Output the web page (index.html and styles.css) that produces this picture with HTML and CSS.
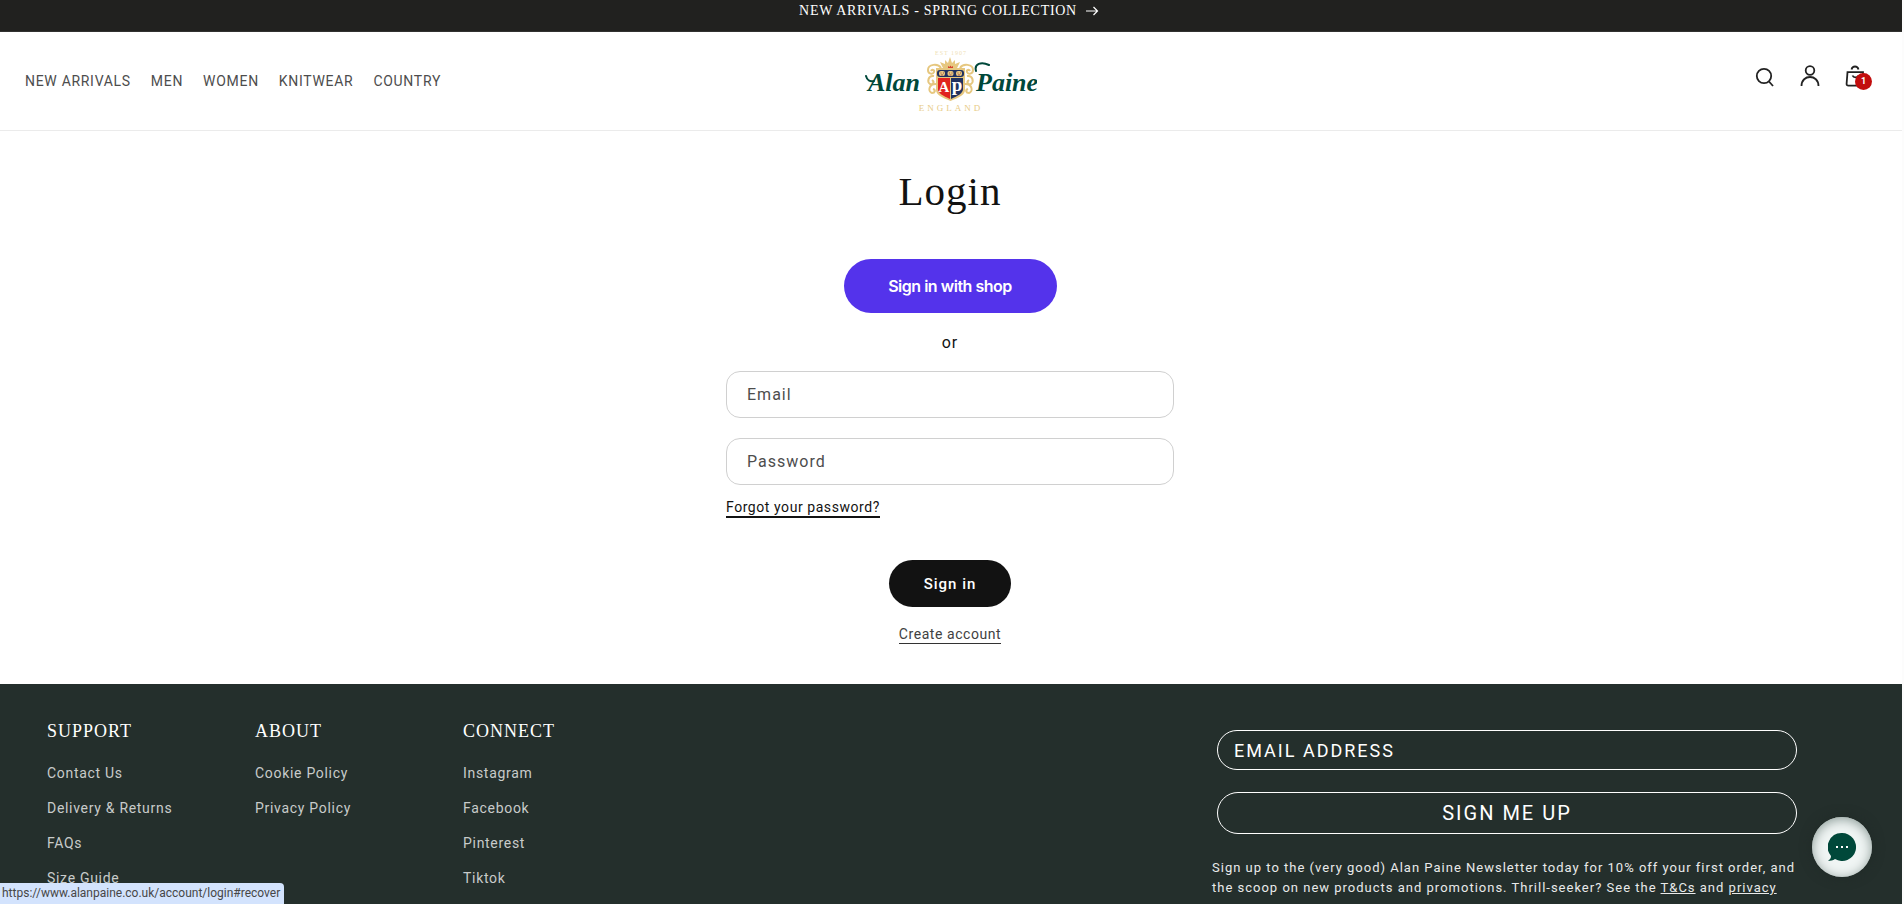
FILE: index.html
```html
<!DOCTYPE html>
<html lang="en">
<head>
<meta charset="utf-8">
<meta name="viewport" content="width=device-width, initial-scale=1">
<title>Login – Alan Paine</title>
<link rel="stylesheet" href="styles.css">
</head>
<body>
<a class="announcement" href="#">
  <span>NEW ARRIVALS - SPRING COLLECTION</span>
  <svg class="announcement-arrow" viewBox="0 0 14 10" aria-hidden="true"><path d="M1 5h11.500M8.500 1l4 4-4 4"/></svg>
</a>
<header class="header">
  <nav class="nav" aria-label="Main">
    <a href="#">NEW ARRIVALS</a>
    <a href="#">MEN</a>
    <a href="#">WOMEN</a>
    <a href="#">KNITWEAR</a>
    <a href="#">COUNTRY</a>
  </nav>
  <a class="logo" href="#" aria-label="Alan Paine England">
    <svg viewBox="0 0 172 64">
      <g class="logo-name">
        <text x="3" y="42">Alan</text>
        <text x="111" y="42">Paine</text>
      </g>
      <path class="swash" d="M1 27c1 4 4 6 8 5M111 22c-2-7 5-10 13-6"/>
      <text class="logo-est" x="86" y="6">EST 1907</text>
      <g class="gold">
        <path d="M78 19l-3-6 5 2 0-4 3 3 2-6 2 6 3-3 0 4 5-2-3 6z"/>
        <path d="M71 19h29v22c0 5-7 8-14.500 11-7.500-3-14.500-6-14.500-11z"/>
      </g>
      <path class="scroll" d="M76 19c-3-5-13-4-13 2 0 4 5 5 6 2 1-2-2-3-3-1M69 27c-6-1-7 6-4 8 3 1 5-2 2-4M71 35c-8 0-8 8-4 9 3 0 4-3 1-4M95 19c3-5 13-4 13 2 0 4-5 5-6 2-1-2 2-3 3-1M102 27c6-1 7 6 4 8-3 1-5-2-2-4M100 35c8 0 8 8 4 9-3 0-4-3-1-4"/>
      <path class="ruby" d="M83 19v-2l1.500 1 1-1.500 1 1.500 1.500-1v2z"/>
      <rect class="navy" x="72" y="21" width="27" height="7" rx="3"/>
      <path class="red" d="M73 29h12v21c-7-3-12-6-12-10z"/>
      <path class="navy" d="M86 29h12v11c0 4-5 7-12 10z"/>
      <g class="gold"><rect x="74" y="22" width="6" height="5" rx="2"/><rect x="82.500" y="22" width="6" height="5" rx="2"/><rect x="91" y="22" width="6" height="5" rx="2"/></g>
      <path class="faces" d="M75.500 24h1M78 24h1M76 26h2M84 24h1M86.500 24h1M84.500 26h2M92.500 24h1M95 24h1M93 26h2"/>
      <text class="mono" x="79" y="43">A</text>
      <text class="mono mono-p" x="92" y="42">p</text>
      <text class="logo-england" x="86" y="62">ENGLAND</text>
    </svg>
  </a>
  <div class="tools">
    <button type="button" aria-label="Search"><svg viewBox="0 0 44 44"><circle cx="21" cy="19" r="7.200"/><path d="M26 24.500l4 4.500"/></svg></button>
    <button type="button" aria-label="Account"><svg viewBox="0 0 44 44"><circle cx="22" cy="13.500" r="4.300"/><path d="M13.500 29c0-12 17-12 17 0"/></svg></button>
    <button type="button" aria-label="Cart, 1 item"><svg viewBox="0 0 44 44"><path d="M14.500 15.200h15.500v12q0 1.500-1.500 1.500h-13q-2 0-1.900-2zM18.500 12.500c1-4 6-4 7 0M19.500 18.500c1 2.500 5 2.500 6 0"/></svg><span class="badge">1</span></button>
  </div>
</header>
<main class="main">
  <h1>Login</h1>
  <button type="button" class="shop">Sign in with shop</button>
  <p class="or">or</p>
  <form class="form">
    <input type="email" aria-label="Email" placeholder="Email">
    <input type="password" aria-label="Password" placeholder="Password">
    <a class="forgot" href="#recover">Forgot your password?</a>
    <button type="button" class="signin">Sign in</button>
    <a class="create" href="#">Create account</a>
  </form>
</main>
<footer class="footer">
  <div class="columns">
    <section><h2>SUPPORT</h2><ul><li><a href="#">Contact Us</a></li><li><a href="#">Delivery &amp; Returns</a></li><li><a href="#">FAQs</a></li><li><a href="#">Size Guide</a></li></ul></section>
    <section><h2>ABOUT</h2><ul><li><a href="#">Cookie Policy</a></li><li><a href="#">Privacy Policy</a></li></ul></section>
    <section><h2>CONNECT</h2><ul><li><a href="#">Instagram</a></li><li><a href="#">Facebook</a></li><li><a href="#">Pinterest</a></li><li><a href="#">Tiktok</a></li></ul></section>
  </div>
  <form class="newsletter">
    <input type="email" aria-label="Email address" placeholder="EMAIL ADDRESS">
    <button type="button">SIGN ME UP</button>
    <p>Sign up to the (very good) Alan Paine Newsletter today for 10% off your first order, and the scoop on new products and promotions. Thrill-seeker? See the <a href="#">T&amp;Cs</a> and <a href="#">privacy</a></p>
  </form>
</footer>
<button type="button" class="chat" aria-label="Chat"><svg viewBox="0 0 28 28"><path d="M14 0a14 14 0 1 1-7 26.100C5 27.500 2.500 28 0 28c2-1.500 3-3 3-5A14 14 0 0 1 14 0z"/><g><rect x="8" y="13" width="2" height="2"/><rect x="13" y="13" width="2" height="2"/><rect x="18" y="13" width="2" height="2"/></g></svg></button>
<div class="status">https://www.alanpaine.co.uk/account/login#recover</div>
</body>
</html>
```
FILE: styles.css
```css
* { box-sizing: border-box; }
html { height: 100%; overflow: hidden; background: #fcfcfc; }
body {
  height: 100%;
  margin: 0 2px 0 0;
  overflow: hidden;
  display: flex;
  flex-direction: column;
  background: #fff;
  color: #121212;
  font-family: Roboto, "Liberation Sans", sans-serif;
  font-size: 16px;
  letter-spacing: 1px;
}
a { color: inherit; }
button { font: inherit; letter-spacing: inherit; cursor: pointer; }
h1, h2, p, ul { margin: 0; padding: 0; font-weight: 400; }
ul { list-style: none; }

.announcement {
  flex: none;
  display: flex;
  justify-content: center;
  align-items: center;
  gap: 8px;
  padding: 0 4px 9px 0;
  border-bottom: 1px solid #323230;
  background: #21211f;
  color: #fff;
  font: 14px/22px "Liberation Serif", serif;
  letter-spacing: 0.05em;
  text-decoration: none;
}
.announcement-arrow { width: 14px; height: 10px; fill: none; stroke: #fff; stroke-width: 1.2; }

.header {
  flex: none;
  display: grid;
  grid-template-columns: 1fr auto 1fr;
  align-items: center;
  height: 99px;
  padding: 0 25px;
  border-bottom: 1px solid #ebebeb;
}
.nav { display: flex; gap: 20px; font-size: 14px; letter-spacing: 0.05em; color: #4d4d4d; }
.nav a { text-decoration: none; }
.logo svg { display: block; width: 172px; height: 64px; }
.logo-name { fill: #00483a; font: italic 700 26px "Liberation Serif", serif; letter-spacing: 0; }
.logo-est { fill: #f0dfb7; font: 6px "Liberation Serif", serif; letter-spacing: 1px; text-anchor: middle; }
.logo-england { fill: #e8cc86; font: 9px "Liberation Serif", serif; letter-spacing: 3px; text-anchor: middle; }
.mono { fill: #fff; font: 700 15px "Liberation Serif", serif; letter-spacing: 0; text-anchor: middle; }
.mono-p { font-size: 19px; }
.swash { fill: none; stroke: #00483a; stroke-width: 2; stroke-linecap: round; }
.gold { fill: #e6c77f; }
.scroll { fill: none; stroke: #e6c77f; stroke-width: 2; }
.red { fill: #e0231f; }
.ruby { fill: #d8402c; }
.navy { fill: #203160; }
.faces { fill: none; stroke: #9c5148; stroke-width: 1; }
.tools { display: flex; justify-content: flex-end; gap: 1px; padding-bottom: 4px; }
.tools button { position: relative; width: 44px; height: 44px; padding: 0; border: 0; background: none; }
.tools svg { display: block; width: 44px; height: 44px; fill: none; stroke: #222; stroke-width: 1.8; }
.badge {
  position: absolute;
  left: 22px;
  top: 16px;
  width: 17px;
  height: 17px;
  border-radius: 50%;
  background: #c20d0d;
  color: #fff;
  font-size: 9px;
  font-weight: 700;
  line-height: 17px;
  letter-spacing: 0;
  text-align: center;
}

.main {
  flex: none;
  display: flex;
  flex-direction: column;
  align-items: center;
  padding: 34px 2px 40px 0;
}
h1 { font: 41px/52px "Liberation Serif", serif; }
.shop {
  width: 213px;
  height: 54px;
  margin-top: 42px;
  border: 0;
  border-radius: 27px;
  background: #5433eb;
  color: #fff;
  font: 600 16px Inter, sans-serif;
  letter-spacing: -0.03em;
}
.or { margin-top: 18px; line-height: 24px; }
.form { width: 448px; max-width: 100%; margin-top: 16px; display: flex; flex-direction: column; align-items: center; }
.form input {
  width: 100%;
  height: 47px;
  margin-bottom: 20px;
  padding: 0 20px;
  border: 1px solid #d0d0d0;
  border-radius: 14px;
  background: #fff;
  font: inherit;
  letter-spacing: 1px;
}
.form input::placeholder { color: #4d4d4d; opacity: 1; }
.forgot, .create { font-size: 14px; line-height: 18px; letter-spacing: 0.04em; text-decoration: none; }
.forgot { align-self: flex-start; margin-top: -7px; border-bottom: 2px solid #121212; }
.signin { width: 122px; height: 47px; margin-top: 42px; border: 0; border-radius: 24px; background: #121212; color: #fff; font-size: 15px; font-weight: 500; }
.create { margin-top: 18px; border-bottom: 1px solid #333; color: #414141; }

.footer {
  flex: 1 0 auto;
  display: flex;
  justify-content: space-between;
  padding: 36px 105px 0 47px;
  background: #242f2c;
  color: #fff;
}
.columns { display: flex; }
.columns section { width: 208px; }
.columns h2 { font: 18px/22px "Liberation Serif", serif; }
.columns ul { margin-top: 14px; }
.columns li { font-size: 14px; line-height: 35px; letter-spacing: 0.05em; color: #c8cbca; }
.columns li a { text-decoration: none; }
.newsletter { width: 585px; padding-top: 10px; }
.newsletter input, .newsletter button {
  display: block;
  width: 580px;
  margin-left: 5px;
  border: 1px solid #fff;
  border-radius: 21px;
  background: transparent;
  color: #fff;
  font: 18px Roboto, sans-serif;
  letter-spacing: 2px;
}
.newsletter input { height: 40px; padding: 0 16px; }
.newsletter input::placeholder { color: #fff; opacity: 1; }
.newsletter button { height: 42px; margin-top: 22px; font-size: 20px; }
.newsletter p { margin-top: 24px; font-size: 13px; line-height: 20px; color: #e9eaea; }

.chat {
  position: fixed;
  right: 32px;
  bottom: 27px;
  width: 60px;
  height: 60px;
  padding: 16px;
  border: 0;
  border-radius: 50%;
  background: #f0f5f4;
  box-shadow: inset 0 2px 12px #8b9b97, 0 0 12px #202a27;
}
.chat svg { display: block; width: 28px; height: 28px; fill: #00483a; }
.chat g { fill: #fff; }
.status {
  position: fixed;
  left: 0;
  bottom: 0;
  padding: 0 4px 0 2px;
  border-radius: 0 4px 0 0;
  background: #d3e3fd;
  color: #474747;
  font: 12px/21px Roboto, sans-serif;
  letter-spacing: 0;
}
```
